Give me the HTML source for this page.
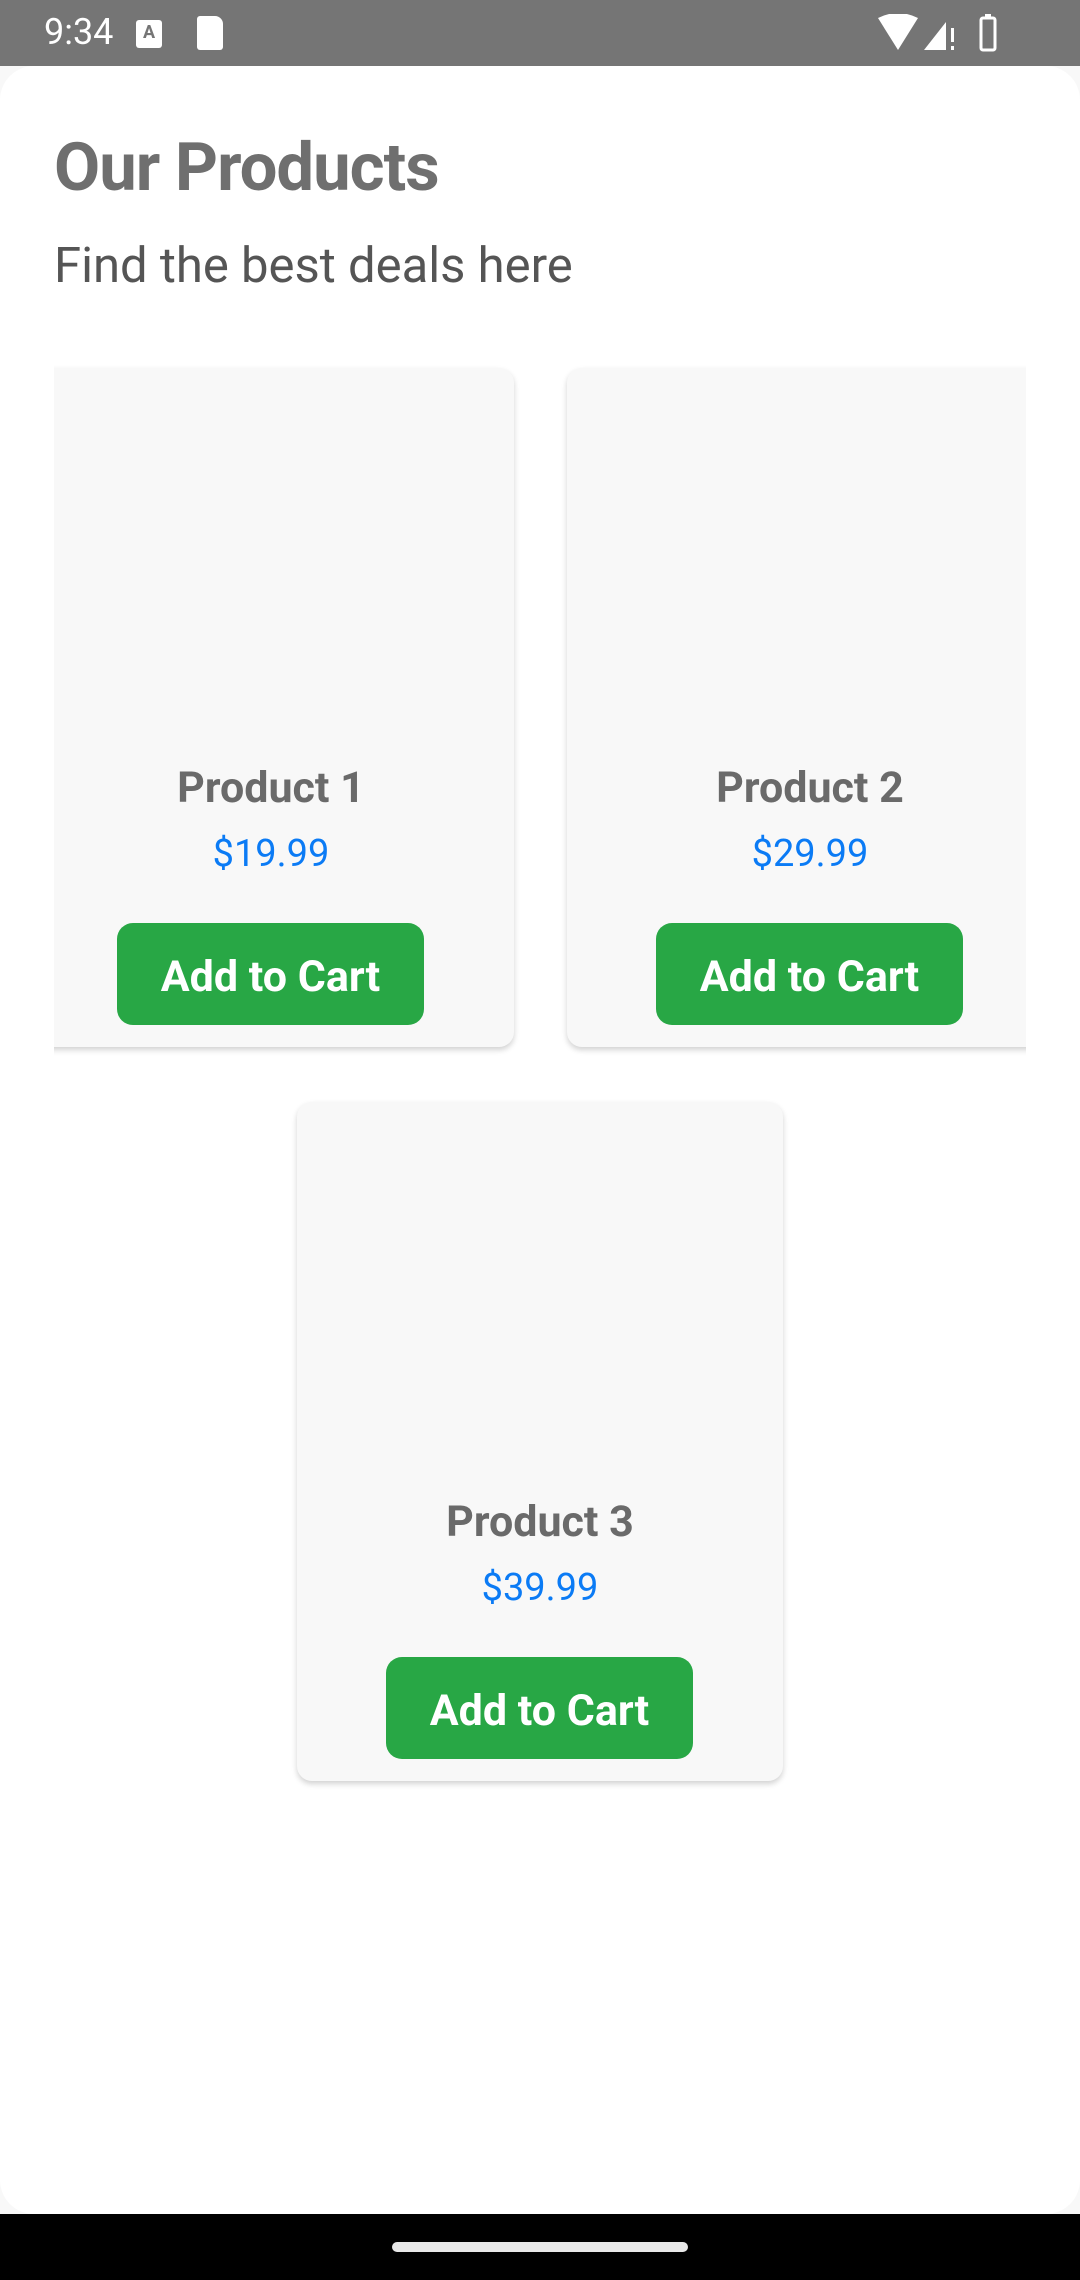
<!DOCTYPE html>
<html><head><meta charset="utf-8"><style>
*{margin:0;padding:0;box-sizing:border-box}
body{width:1080px;height:2280px;background:#f8f8f8;position:relative;overflow:hidden;font-family:"Roboto","Liberation Sans",sans-serif}
.sb{position:absolute;left:0;top:0;width:1080px;height:66px;background:#757575;color:#fff}
.main{position:absolute;left:0;top:66px;width:1080px;height:2148px;background:#fff;border-radius:34px}
.nav{position:absolute;left:0;top:2214px;width:1080px;height:66px;background:#000}
.handle{position:absolute;left:392px;top:28px;width:296px;height:10px;border-radius:5px;background:#e8e8e8}
h1{position:absolute;left:54px;top:128px;font-size:67px;font-weight:bold;color:#6f6f6f;letter-spacing:-1px;line-height:80px}
.sub{position:absolute;left:54px;top:231px;font-size:49px;color:#555;line-height:70px}
.clip{position:absolute;left:54px;top:340px;width:972px;height:740px;overflow:hidden}
.card{position:absolute;width:486px;height:679px;background:#f8f8f8;border-radius:15px;box-shadow:0 3px 6px rgba(0,0,0,.18)}
.name{position:absolute;left:0;width:100%;top:395px;text-align:center;font-size:43px;font-weight:bold;color:#6a6a6a;line-height:50px}
.price{position:absolute;left:0;width:100%;top:461px;text-align:center;font-size:38px;color:#0b7bf5;line-height:50px}
.btn{position:absolute;left:89px;top:555px;width:307px;height:102px;border-radius:16px;background:#28a745;color:#fff;font-weight:bold;font-size:43px;text-align:center;line-height:108px}
</style></head><body>
<div class="sb">
<div style="position:absolute;left:44px;top:9px;font-size:36px;line-height:46px">9:34</div>
<div style="position:absolute;left:136px;top:20px;width:26px;height:28px;background:#fff;border-radius:3px;color:#757575;font-size:18px;font-weight:bold;text-align:center;line-height:26px">A</div>
<div style="position:absolute;left:197px;top:16px;width:26px;height:34px;background:#fff;border-radius:3px 8px 3px 3px"></div>
<svg style="position:absolute;left:878px;top:14px" width="130" height="40" viewBox="0 0 130 40">
<path d="M0 4 Q20 -6 40 4 L20 36 Z" fill="#fff"/>
<path d="M46 36 L68 8 L68 36 Z" fill="#fff"/>
<rect x="73" y="14" width="3" height="14" fill="#fff"/><rect x="73" y="32" width="3" height="4" fill="#fff"/>
<rect x="103" y="4" width="14" height="32" rx="2" fill="none" stroke="#fff" stroke-width="3"/><rect x="107" y="0" width="6" height="4" fill="#fff"/>
</svg>
</div>
<div class="main"></div>
<h1>Our Products</h1>
<div class="sub">Find the best deals here</div>
<div class="clip">
<div class="card" style="left:-26px;top:28px"><div class="name">Product 1</div><div class="price">$19.99</div><div class="btn">Add to Cart</div></div>
<div class="card" style="left:513px;top:28px"><div class="name">Product 2</div><div class="price">$29.99</div><div class="btn">Add to Cart</div></div>
</div>
<div class="card" style="left:297px;top:1102px"><div class="name">Product 3</div><div class="price">$39.99</div><div class="btn">Add to Cart</div></div>
<div class="nav"><div class="handle"></div></div>
</body></html>
